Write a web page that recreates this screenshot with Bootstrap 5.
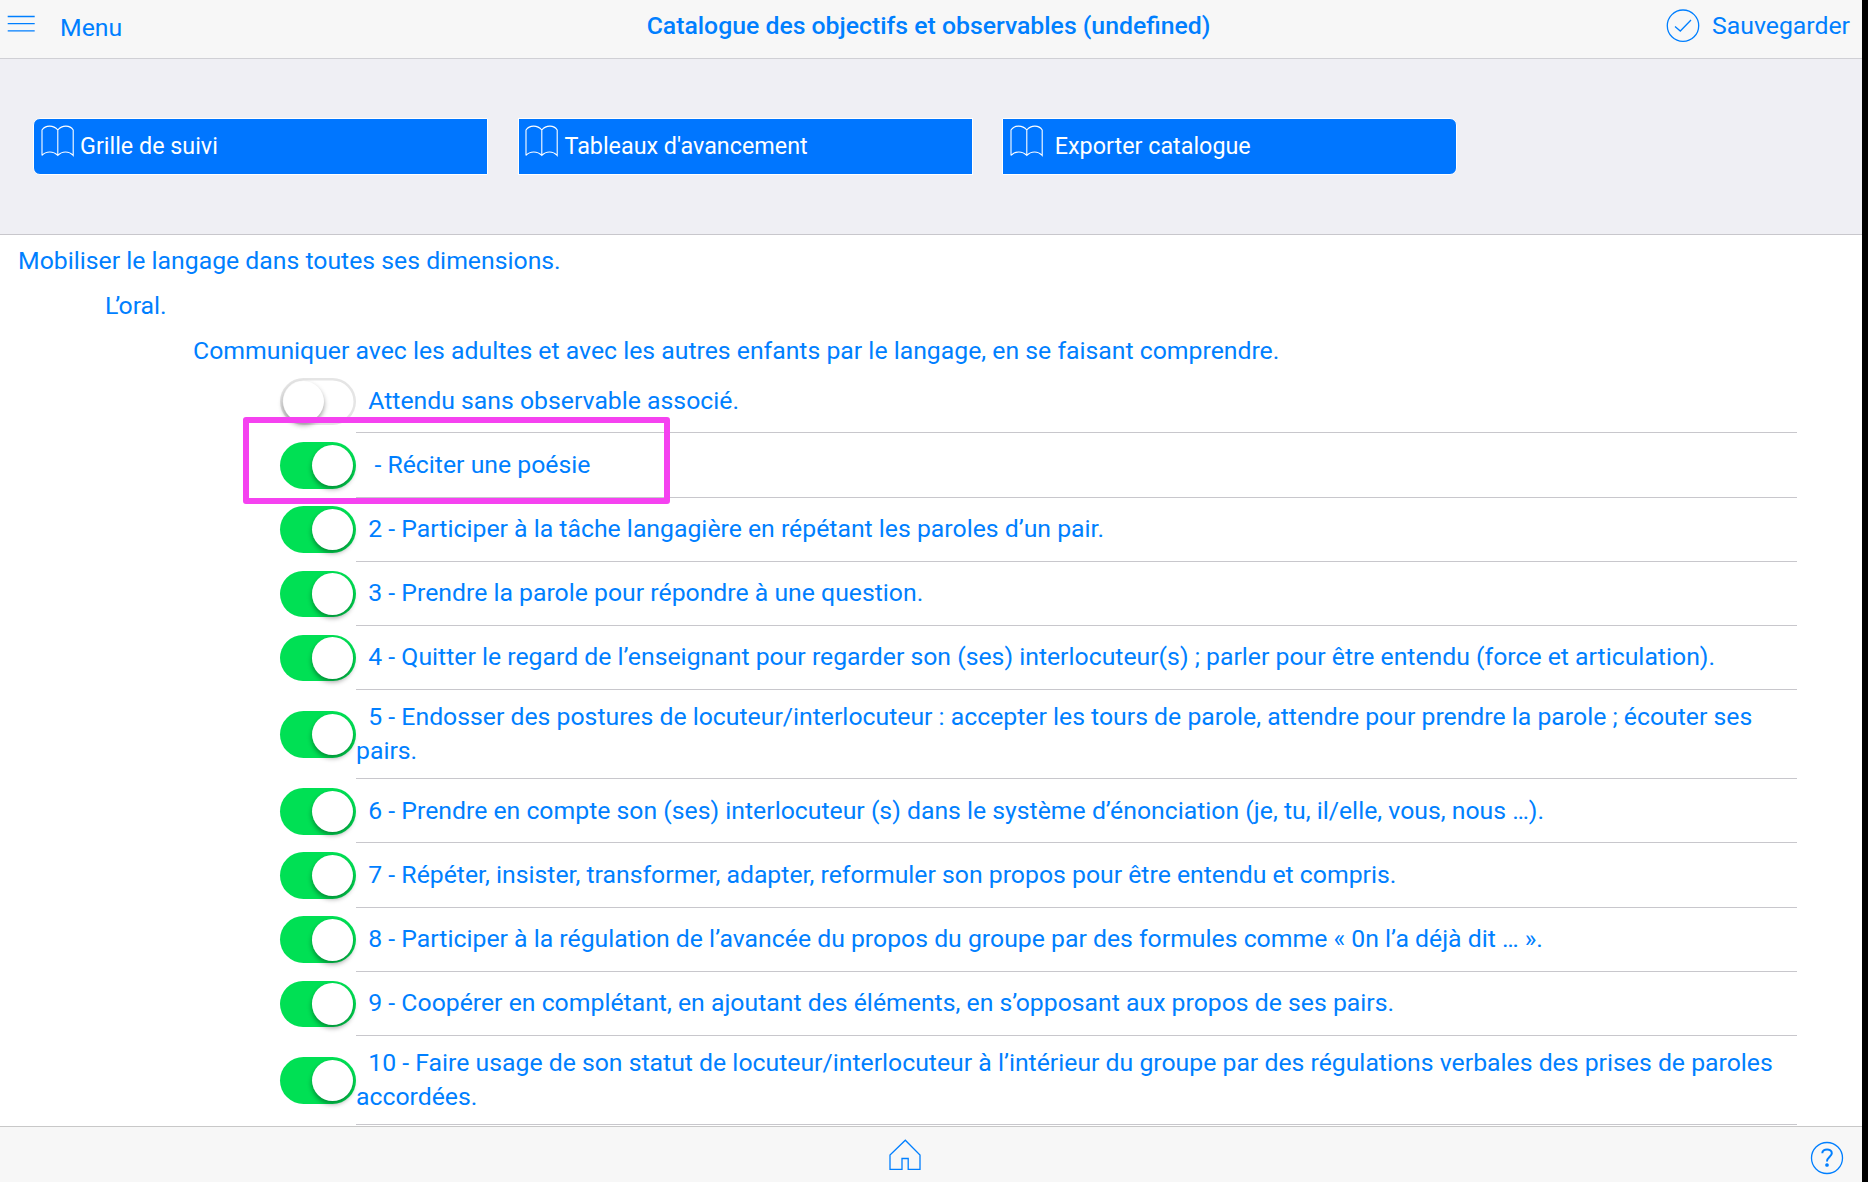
<!DOCTYPE html>
<html lang="fr">
<head>
<meta charset="utf-8">
<meta name="viewport" content="width=device-width, initial-scale=1">
<title>Catalogue des objectifs et observables</title>
<link href="https://cdn.jsdelivr.net/npm/bootstrap@5.3.0/dist/css/bootstrap.min.css" rel="stylesheet">
<style>
  body { background: #000; overflow: hidden; }
  .app-shell { width: 1862px; height: 1182px; background: #fff; color: #007fff; font-family: Roboto, sans-serif; font-size: 24.79px; line-height: 33.54px; }
  svg { display: block; flex: none; fill: none; stroke: currentColor; }
  .app-head { height: 59px; background: #f7f7f7; border-bottom: 1px solid #d0d0d5; padding: 0 12px 0 7px; }
  .head-side { width: 400px; }
  .head-save { padding-bottom: 5px; gap: 12px; }
  .head-save span { padding-bottom: 2px; }
  .head-title { font-weight: 500; padding-bottom: 6px; }
  .menu-label { padding: 0 0 2px 24px; }
  .menu-icon { margin-bottom: 10px; }
  .tool-band { height: 176px; background: #efeff4; border-bottom: 1px solid #c8c7cc; padding: 59px 0 0 33px; gap: 29.5px; }
  .tool-btn { width: 455px; height: 57px; background: #0076ff; border: 1px solid #fff; border-radius: 0; color: #fff; font-size: 23.33px; padding: 0 7px; line-height: 54px; }
  .tool-btn:hover { background: #0068e0; color: #fff; }
  .tool-btn svg { margin: 6px 6.5px 0 -.5px; }
  .round-start { border-radius: 7px 0 0 7px; }
  .round-end { border-radius: 0 7px 7px 0; }
  .heading-line { height: 45.15px; line-height: 45.15px; }
  .lvl-1 { padding-left: 18px; margin-top: 3px; }
  .lvl-2 { padding-left: 105px; }
  .tight-l { letter-spacing: -3.2px; }
  .lvl-3 { padding-left: 193px; }
  .obs-list { margin: -4.2px 0 0 280px; width: 1516.5px; position: relative; }
  .obs-row { min-height: 64.17px; }
  .obs-text { border-bottom: 1px solid #c8c7cc; padding: 10.1px 0 11.1px; min-height: inherit; }
  .ios-switch { width: 76px; height: 46.5px; border-radius: 24px; border: 0; background: #fff; box-shadow: inset 0 0 0 2.5px #e5e5e5; padding: 2.7px; }
  .ios-knob { width: 41.4px; height: 41.4px; border-radius: 50%; background: #fff; box-shadow: 0 3px 5px rgba(0,0,0,.38); }
  .ios-switch.is-on { background: #00e054; box-shadow: none; }
  .ios-switch.is-on .ios-knob { margin-left: auto; }
  .focus-frame { position: absolute; left: -37px; top: 47.4px; width: 427px; height: 87px; border: 6px solid #f542f0; border-radius: 3px; pointer-events: none; }
  .app-foot { height: 56px; background: #f7f7f7; border-top: 1px solid #c8c8c8; }
  .foot-start { width: 3px; }
  .foot-end { width: 60px; padding: 6px 0 0 8px; }
  .home-icon { margin: 1px 0 0 5px; }
</style>
<script src="https://cdn.jsdelivr.net/npm/bootstrap@5.3.0/dist/js/bootstrap.bundle.min.js"></script>
</head>
<body>
<svg width="0" height="0" class="position-absolute" aria-hidden="true">
  <symbol id="book" viewBox="0 0 33 32"><path d="M1 30.500V5C4.500-.2 12.500-.2 16.800 5C21-.2 29-.2 32.200 5V30.500C28 25.800 21 25.800 16.800 30.500C12.500 25.800 5 25.800 1 30.500M16.800 5V30.500"/></symbol>
</svg>
<div class="app-shell d-flex flex-column">
  <header class="app-head d-flex align-items-center justify-content-between flex-shrink-0">
    <div class="head-side d-flex align-items-center">
      <svg class="menu-icon" width="29" height="18" stroke-width="1.3"><path d="M.7 1.500H27.700M.7 8.700H27.700M.7 15.900H27.700"/></svg>
      <span class="menu-label">Menu</span>
    </div>
    <div class="head-title">Catalogue des objectifs et observables (undefined)</div>
    <div class="head-side head-save d-flex align-items-center justify-content-end">
      <svg width="34" height="34" stroke-width="1.3"><circle cx="17" cy="16.700" r="15.700"/><path d="M9 17.500L14.300 22L25 11"/></svg>
      <span>Sauvegarder</span>
    </div>
  </header>
  <nav class="tool-band d-flex flex-shrink-0">
    <button class="tool-btn round-start btn d-flex"><svg width="33" height="32" stroke-width="1.1"><use href="#book"/></svg>Grille de suivi</button>
    <button class="tool-btn btn d-flex"><svg width="33" height="32" stroke-width="1.1"><use href="#book"/></svg>Tableaux d'avancement</button>
    <button class="tool-btn round-end btn d-flex"><svg width="33" height="32" stroke-width="1.1"><use href="#book"/></svg>&nbsp;Exporter catalogue</button>
  </nav>
  <main class="flex-grow-1 overflow-hidden">
    <div class="heading-line lvl-1">Mobiliser le langage dans toutes ses dimensions.</div>
    <div class="heading-line lvl-2"><span class="tight-l">L</span>’oral.</div>
    <div class="heading-line lvl-3">Communiquer avec les adultes et avec les autres enfants par le langage, en se faisant comprendre.</div>
    <div class="obs-list">
      <div class="obs-row d-flex align-items-center"><button class="ios-switch flex-shrink-0"><div class="ios-knob"></div></button><div class="obs-text d-flex align-items-center flex-grow-1">&nbsp; Attendu sans observable associé.</div></div>
      <div class="obs-row d-flex align-items-center"><button class="ios-switch is-on flex-shrink-0"><div class="ios-knob"></div></button><div class="obs-text d-flex align-items-center flex-grow-1">&nbsp;&nbsp; - Réciter une poésie</div></div>
      <div class="obs-row d-flex align-items-center"><button class="ios-switch is-on flex-shrink-0"><div class="ios-knob"></div></button><div class="obs-text d-flex align-items-center flex-grow-1">&nbsp; 2 - Participer à la tâche langagière en répétant les paroles d’un pair.</div></div>
      <div class="obs-row d-flex align-items-center"><button class="ios-switch is-on flex-shrink-0"><div class="ios-knob"></div></button><div class="obs-text d-flex align-items-center flex-grow-1">&nbsp; 3 - Prendre la parole pour répondre à une question.</div></div>
      <div class="obs-row d-flex align-items-center"><button class="ios-switch is-on flex-shrink-0"><div class="ios-knob"></div></button><div class="obs-text d-flex align-items-center flex-grow-1">&nbsp; 4 - Quitter le regard de l’enseignant pour regarder son (ses) interlocuteur(s) ; parler pour être entendu (force et articulation).</div></div>
      <div class="obs-row d-flex align-items-center"><button class="ios-switch is-on flex-shrink-0"><div class="ios-knob"></div></button><div class="obs-text d-flex align-items-center flex-grow-1">&nbsp; 5 - Endosser des postures de locuteur/interlocuteur : accepter les tours de parole, attendre pour prendre la parole ; écouter ses pairs.</div></div>
      <div class="obs-row d-flex align-items-center"><button class="ios-switch is-on flex-shrink-0"><div class="ios-knob"></div></button><div class="obs-text d-flex align-items-center flex-grow-1">&nbsp; 6 - Prendre en compte son (ses) interlocuteur (s) dans le système d’énonciation (je, tu, il/elle, vous, nous …).</div></div>
      <div class="obs-row d-flex align-items-center"><button class="ios-switch is-on flex-shrink-0"><div class="ios-knob"></div></button><div class="obs-text d-flex align-items-center flex-grow-1">&nbsp; 7 - Répéter, insister, transformer, adapter, reformuler son propos pour être entendu et compris.</div></div>
      <div class="obs-row d-flex align-items-center"><button class="ios-switch is-on flex-shrink-0"><div class="ios-knob"></div></button><div class="obs-text d-flex align-items-center flex-grow-1">&nbsp; 8 - Participer à la régulation de l’avancée du propos du groupe par des formules comme « 0n l’a déjà dit … ».</div></div>
      <div class="obs-row d-flex align-items-center"><button class="ios-switch is-on flex-shrink-0"><div class="ios-knob"></div></button><div class="obs-text d-flex align-items-center flex-grow-1">&nbsp; 9 - Coopérer en complétant, en ajoutant des éléments, en s’opposant aux propos de ses pairs.</div></div>
      <div class="obs-row d-flex align-items-center"><button class="ios-switch is-on flex-shrink-0"><div class="ios-knob"></div></button><div class="obs-text d-flex align-items-center flex-grow-1">&nbsp; 10 - Faire usage de son statut de locuteur/interlocuteur à l’intérieur du groupe par des régulations verbales des prises de paroles accordées.</div></div>
      <div class="focus-frame"></div>
    </div>
  </main>
  <footer class="app-foot d-flex align-items-center justify-content-between flex-shrink-0">
    <div class="foot-start"></div>
    <svg class="home-icon" width="32" height="32" stroke-width="1.300"><path d="M1 30.300V16L16.300 1.200L31 16V30.300H19.200V19.500H13V30.300Z"/></svg>
    <div class="foot-end"><svg width="34" height="34" stroke-width="1.300"><circle cx="17" cy="17" r="15.500"/><path stroke-width="2" d="M12.300 12.200C12.300 7.200 21.800 7.200 21.800 12.200C21.800 15.600 17 16 17 20.500"/><circle cx="17" cy="24" r="1.200" fill="currentColor"/></svg></div>
  </footer>
</div>
</body>
</html>
